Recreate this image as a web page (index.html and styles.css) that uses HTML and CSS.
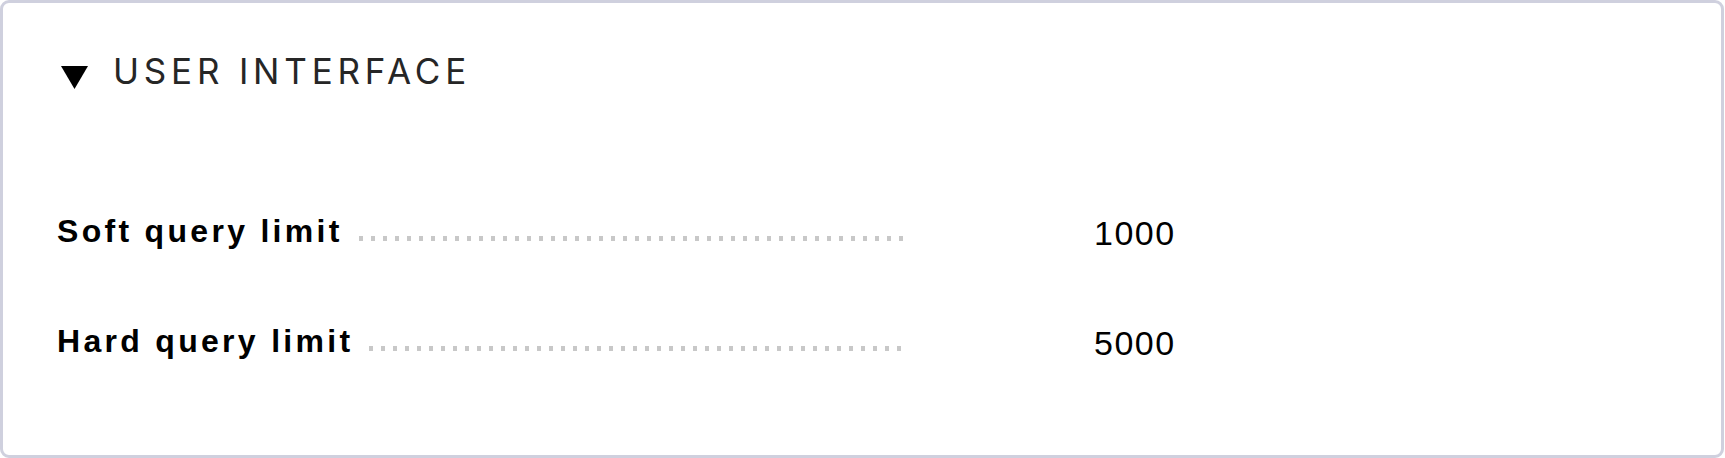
FILE: index.html
```html
<!DOCTYPE html>
<html>
<head>
<meta charset="utf-8">
<link rel="stylesheet" href="styles.css">
</head>
<body>
<section class="panel">
  <header class="panel-head">
    <svg class="caret" width="27" height="23" viewBox="0 0 27 23"><polygon points="0,0 27,0 13.5,23" fill="#000"/></svg>
    <h2 class="title">USER INTERFACE</h2>
  </header>
  <dl class="settings">
    <div class="row">
      <dt class="term"><span class="label">Soft query limit</span><span class="leader"></span></dt>
      <dd class="value">1000</dd>
    </div>
    <div class="row">
      <dt class="term"><span class="label">Hard query limit</span><span class="leader"></span></dt>
      <dd class="value">5000</dd>
    </div>
  </dl>
</section>
</body>
</html>
```
FILE: styles.css
```css
html, body {
  margin: 0;
  padding: 0;
  background: #fff;
}
.panel {
  box-sizing: border-box;
  width: 1724px;
  height: 458px;
  border: 3px solid #cfd0de;
  border-radius: 9px;
  padding: 50px 54px 0 54px;
}
.panel-head {
  display: flex;
  align-items: flex-start;
  gap: 25px;
}
.caret {
  display: block;
  margin-top: 13px;
  margin-left: 4px;
  flex: none;
}
.title {
  margin: 1px 0 0 0;
  font-family: Inter, "Liberation Sans", sans-serif;
  font-weight: 400;
  font-size: 35px;
  line-height: 34px;
  letter-spacing: 4.8px;
  color: #262626;
}
.settings {
  margin: 120px 0 0 0;
  display: flex;
  flex-direction: column;
  gap: 62px;
}
.row {
  display: grid;
  grid-template-columns: 847px auto;
  column-gap: 190px;
  align-items: start;
  height: 48px;
}
.term {
  margin: 0;
  display: flex;
  align-items: baseline;
  font-family: "Liberation Sans", Arial, sans-serif;
  font-weight: 700;
  font-size: 32px;
  line-height: 44px;
  color: #000;
}
.label {
  letter-spacing: 3.3px;
  white-space: nowrap;
}
.leader {
  flex: 1 1 auto;
  height: 6px;
  margin-left: 16px;
  background-image: linear-gradient(to right, #c8c8c8 0, #c8c8c8 4px, transparent 4px);
  background-size: 12px 5px;
  background-repeat: repeat-x;
  background-position: 0 0;
}
.value {
  margin: 0;
  font-family: "Liberation Sans", Arial, sans-serif;
  font-size: 34px;
  line-height: 48px;
  letter-spacing: 1.5px;
  color: #000;
}
```
